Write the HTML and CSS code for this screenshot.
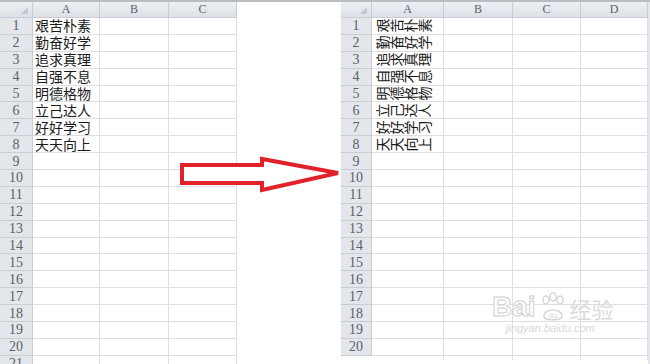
FILE: index.html
```html
<!DOCTYPE html>
<html>
<head>
    <meta charset="utf-8">
    <title>文字方向</title>
    <link rel="stylesheet" href="styles.css">
</head>
<body>
<div id="page">
    <div class="sheet sheet-left">
        <div class="corner"><span class="tri"></span></div><div class="colHead">A</div><div class="colHead">B</div><div class="colHead">C</div>
        <div class="rowHead">1</div><div class="cell">艰苦朴素</div><div class="cell"></div><div class="cell"></div>
        <div class="rowHead">2</div><div class="cell">勤奋好学</div><div class="cell"></div><div class="cell"></div>
        <div class="rowHead">3</div><div class="cell">追求真理</div><div class="cell"></div><div class="cell"></div>
        <div class="rowHead">4</div><div class="cell">自强不息</div><div class="cell"></div><div class="cell"></div>
        <div class="rowHead">5</div><div class="cell">明德格物</div><div class="cell"></div><div class="cell"></div>
        <div class="rowHead">6</div><div class="cell">立己达人</div><div class="cell"></div><div class="cell"></div>
        <div class="rowHead">7</div><div class="cell">好好学习</div><div class="cell"></div><div class="cell"></div>
        <div class="rowHead">8</div><div class="cell">天天向上</div><div class="cell"></div><div class="cell"></div>
        <div class="rowHead">9</div><div class="cell"></div><div class="cell"></div><div class="cell"></div>
        <div class="rowHead">10</div><div class="cell"></div><div class="cell"></div><div class="cell"></div>
        <div class="rowHead">11</div><div class="cell"></div><div class="cell"></div><div class="cell"></div>
        <div class="rowHead">12</div><div class="cell"></div><div class="cell"></div><div class="cell"></div>
        <div class="rowHead">13</div><div class="cell"></div><div class="cell"></div><div class="cell"></div>
        <div class="rowHead">14</div><div class="cell"></div><div class="cell"></div><div class="cell"></div>
        <div class="rowHead">15</div><div class="cell"></div><div class="cell"></div><div class="cell"></div>
        <div class="rowHead">16</div><div class="cell"></div><div class="cell"></div><div class="cell"></div>
        <div class="rowHead">17</div><div class="cell"></div><div class="cell"></div><div class="cell"></div>
        <div class="rowHead">18</div><div class="cell"></div><div class="cell"></div><div class="cell"></div>
        <div class="rowHead">19</div><div class="cell"></div><div class="cell"></div><div class="cell"></div>
        <div class="rowHead">20</div><div class="cell"></div><div class="cell"></div><div class="cell"></div>
        <div class="rowHead">21</div><div class="cell"></div><div class="cell"></div><div class="cell"></div>
    </div>

    <div class="gap"></div>

    <div class="sheet sheet-right">
        <div class="corner"><span class="tri"></span></div><div class="colHead">A</div><div class="colHead">B</div><div class="colHead">C</div><div class="colHead">D</div>
        <div class="rowHead">1</div><div class="cell rot"><span>艰</span><span>苦</span><span>朴</span><span>素</span></div><div class="cell"></div><div class="cell"></div><div class="cell"></div>
        <div class="rowHead">2</div><div class="cell rot"><span>勤</span><span>奋</span><span>好</span><span>学</span></div><div class="cell"></div><div class="cell"></div><div class="cell"></div>
        <div class="rowHead">3</div><div class="cell rot"><span>追</span><span>求</span><span>真</span><span>理</span></div><div class="cell"></div><div class="cell"></div><div class="cell"></div>
        <div class="rowHead">4</div><div class="cell rot"><span>自</span><span>强</span><span>不</span><span>息</span></div><div class="cell"></div><div class="cell"></div><div class="cell"></div>
        <div class="rowHead">5</div><div class="cell rot"><span>明</span><span>德</span><span>格</span><span>物</span></div><div class="cell"></div><div class="cell"></div><div class="cell"></div>
        <div class="rowHead">6</div><div class="cell rot"><span>立</span><span>己</span><span>达</span><span>人</span></div><div class="cell"></div><div class="cell"></div><div class="cell"></div>
        <div class="rowHead">7</div><div class="cell rot"><span>好</span><span>好</span><span>学</span><span>习</span></div><div class="cell"></div><div class="cell"></div><div class="cell"></div>
        <div class="rowHead">8</div><div class="cell rot"><span>天</span><span>天</span><span>向</span><span>上</span></div><div class="cell"></div><div class="cell"></div><div class="cell"></div>
        <div class="rowHead">9</div><div class="cell"></div><div class="cell"></div><div class="cell"></div><div class="cell"></div>
        <div class="rowHead">10</div><div class="cell"></div><div class="cell"></div><div class="cell"></div><div class="cell"></div>
        <div class="rowHead">11</div><div class="cell"></div><div class="cell"></div><div class="cell"></div><div class="cell"></div>
        <div class="rowHead">12</div><div class="cell"></div><div class="cell"></div><div class="cell"></div><div class="cell"></div>
        <div class="rowHead">13</div><div class="cell"></div><div class="cell"></div><div class="cell"></div><div class="cell"></div>
        <div class="rowHead">14</div><div class="cell"></div><div class="cell"></div><div class="cell"></div><div class="cell"></div>
        <div class="rowHead">15</div><div class="cell"></div><div class="cell"></div><div class="cell"></div><div class="cell"></div>
        <div class="rowHead">16</div><div class="cell"></div><div class="cell"></div><div class="cell"></div><div class="cell"></div>
        <div class="rowHead">17</div><div class="cell"></div><div class="cell"></div><div class="cell"></div><div class="cell"></div>
        <div class="rowHead">18</div><div class="cell"></div><div class="cell"></div><div class="cell"></div><div class="cell"></div>
        <div class="rowHead">19</div><div class="cell"></div><div class="cell"></div><div class="cell"></div><div class="cell"></div>
        <div class="rowHead">20</div><div class="cell"></div><div class="cell"></div><div class="cell"></div><div class="cell"></div>
        <div class="blank"></div><div class="tick"></div><div class="tick"></div><div class="tick"></div><div class="tick"></div>
    </div>

    <svg class="arrow" width="170" height="44" viewBox="176 153 170 44">
        <polygon points="182,165 262,165 262,159 338,173 262,190 262,183 182,183"
                 fill="#fff" stroke="#e2222b" stroke-width="4" stroke-linejoin="miter"/>
    </svg>

    <div class="watermark">
        <div class="wmLogo">
            <span class="wmBai">Bai</span>
            <svg class="paw" width="30" height="30" viewBox="0 0 30 30">
                <ellipse cx="8" cy="8" rx="3" ry="4" fill="none" stroke="#d6d6d6" stroke-width="1.5"/>
                <ellipse cx="15" cy="5" rx="3" ry="4" fill="none" stroke="#d6d6d6" stroke-width="1.5"/>
                <ellipse cx="22" cy="8" rx="3" ry="4" fill="none" stroke="#d6d6d6" stroke-width="1.5"/>
                <path d="M6 24 C6 16 24 16 24 24 C24 29 6 29 6 24 Z" fill="none" stroke="#d6d6d6" stroke-width="1.5"/>
                <text x="15" y="26" font-size="8" text-anchor="middle" fill="#d6d6d6" font-family="Liberation Sans">du</text>
            </svg>
            <span class="wmJy">经验</span>
        </div>
        <div class="wmUrl">jingyan.baidu.com</div>
    </div>
</div>
</body>
</html>
```

FILE: styles.css
```css
* {
    margin: 0;
    padding: 0;
    box-sizing: border-box;
}

body {
    width: 650px;
    height: 364px;
    overflow: hidden;
    background: #fff;
}

div#page {
    position: relative;
    display: flex;
    width: 650px;
    height: 364px;
    border-top: 2px solid #b9bdc2;
    overflow: hidden;
}

div.sheet {
    display: grid;
    grid-template-rows: 16px;
    grid-auto-rows: 16.9px;
    align-content: start;
}

div.sheet-left {
    width: 237px;
    grid-template-columns: 33px 67px 69px 68px;
}

div.sheet-right {
    width: 309px;
    grid-template-columns: 31px 72px 69px 68px 67px;
    border-right: 2px solid #e3e6ea;
}

div.gap {
    width: 104px;
}

div.corner,
div.colHead,
div.rowHead {
    background: #e3e7ec;
    color: #5c6066;
    font-family: "Liberation Serif", "DejaVu Serif", serif;
    border-right: 1px solid #c9ced5;
    border-bottom: 1px solid #c9ced5;
    display: flex;
    align-items: center;
    justify-content: center;
}

div.colHead {
    font-size: 12px;
    background: linear-gradient(#eceff3, #dde1e7);
}

div.corner {
    position: relative;
    background: linear-gradient(#eceff3, #dde1e7);
}

span.tri {
    position: absolute;
    right: 4px;
    bottom: 3px;
    width: 0;
    height: 0;
    border-left: 7px solid transparent;
    border-bottom: 7px solid #c3c8cf;
}

div.rowHead {
    font-size: 14px;
    padding-top: 1px;
}

div.cell {
    border-right: 1px solid #dcdee1;
    border-bottom: 1px solid #dcdee1;
    font-family: "Noto Sans CJK SC", sans-serif;
    font-size: 14px;
    line-height: 15px;
    color: #1a1a1a;
    padding-left: 2px;
    white-space: nowrap;
    display: flex;
    align-items: center;
}

div.rot {
    padding-left: 3px;
}

div.rot span {
    display: inline-block;
    transform: rotate(-90deg);
    width: 14px;
}

div.blank {
    background: #fff;
}

div.tick {
    border-right: 1px solid #dcdee1;
    height: 4px;
}

svg.arrow {
    position: absolute;
    left: 176px;
    top: 151px;
}

div.watermark {
    position: absolute;
    left: 492px;
    top: 290px;
    color: #d6d6d6;
    font-family: "Liberation Sans", sans-serif;
}

div.wmLogo {
    display: flex;
    align-items: flex-end;
    gap: 2px;
}

span.wmBai {
    font-size: 28px;
    font-weight: bold;
    line-height: 30px;
    color: #fff;
    -webkit-text-stroke: 1px #cfcfcf;
}

span.wmJy {
    font-family: "Noto Sans CJK SC", sans-serif;
    font-size: 22px;
    line-height: 28px;
    color: #dcdcdc;
}

div.wmUrl {
    font-size: 11px;
    font-style: italic;
    color: #d8d8d8;
    padding-left: 14px;
}
```
